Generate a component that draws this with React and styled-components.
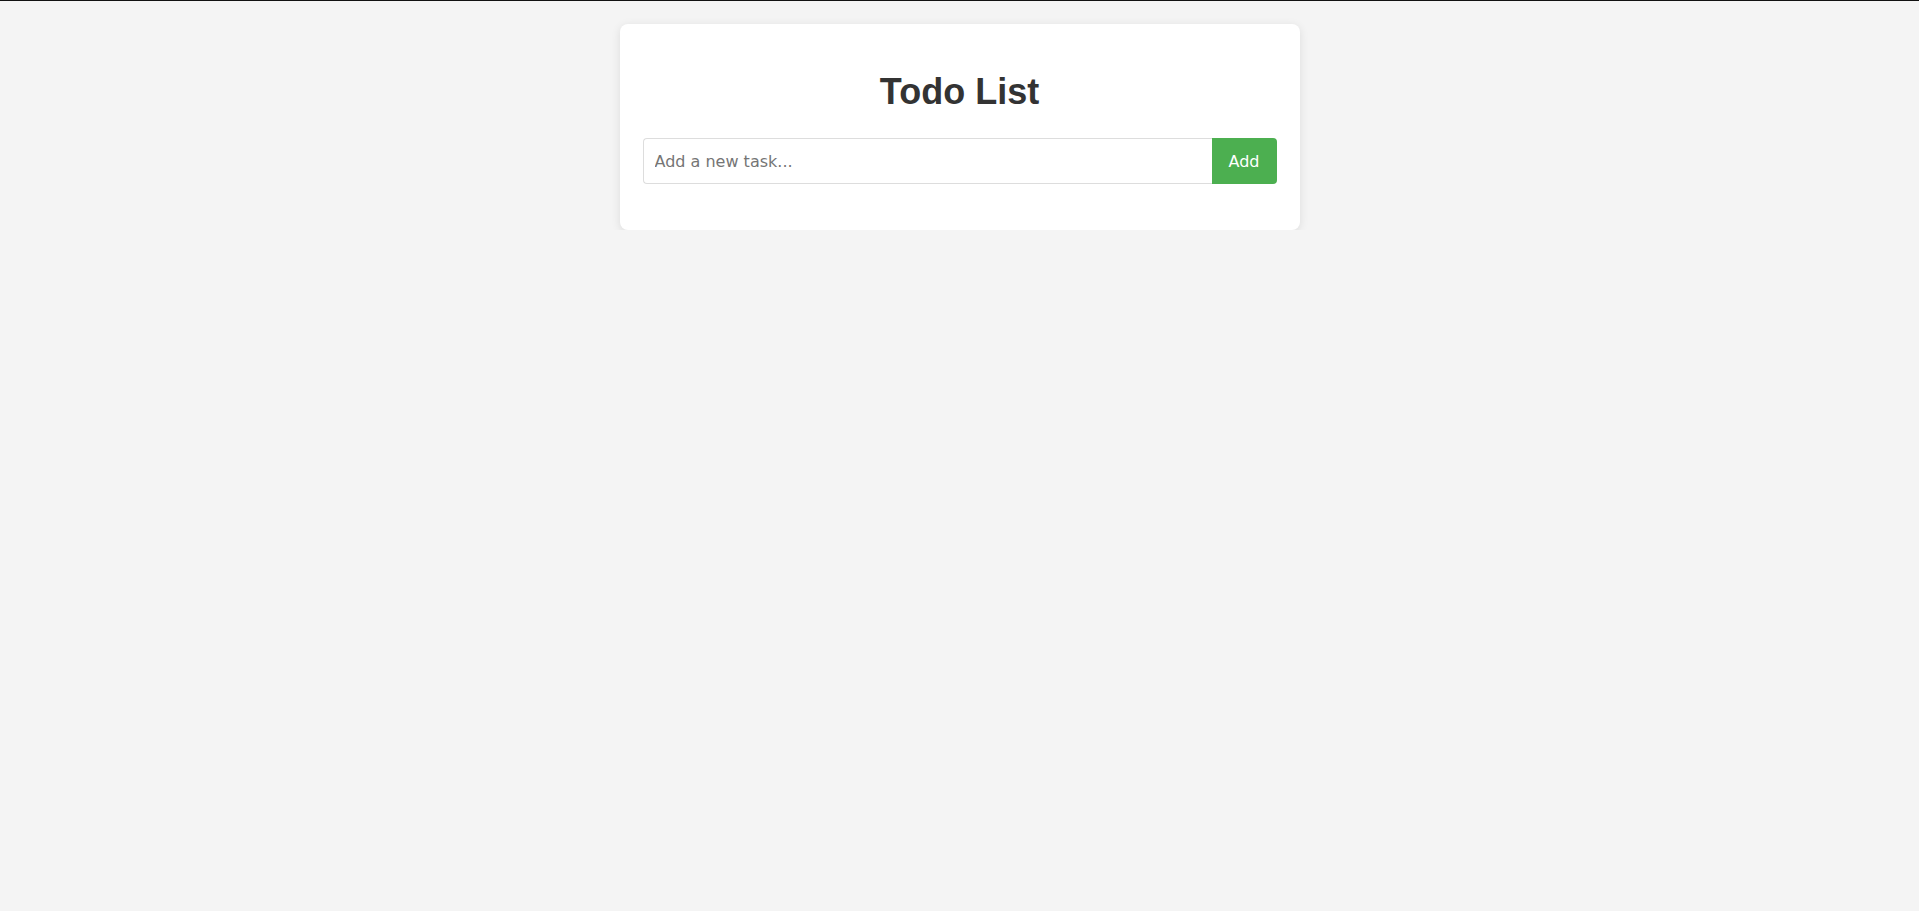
import styled, { createGlobalStyle } from 'styled-components';

const GlobalStyle = createGlobalStyle`
    html, body {
        margin: 0;
        padding: 0;
        background: #f4f4f4;
        font-family: "Liberation Sans", Arial, sans-serif;
    }
    body {
        border-top: 1px solid #111;
    }
`;

const App = () => {
    return (
        <>
            <GlobalStyle />
            <Page>
                <Card>
                    <Title>Todo List</Title>
                    <Form onSubmit={(e) => e.preventDefault()}>
                        <Input type="text" placeholder="Add a new task..." />
                        <AddButton type="submit">Add</AddButton>
                    </Form>
                </Card>
            </Page>
        </>
    );
};

const Page = styled.div`
    display: flex;
    justify-content: center;
    padding-top: 23px;
`;

const Card = styled.div`
    width: 680px;
    box-sizing: border-box;
    padding: 24px 23px 46px 23px;
    background: #fff;
    border-radius: 8px;
    box-shadow: 0 2px 10px rgba(0, 0, 0, 0.1);
`;

const Title = styled.h1`
    margin: 24px 0 26px;
    text-align: center;
    font-size: 36px;
    line-height: 40px;
    font-weight: 700;
    color: #333;
`;

const Form = styled.form`
    display: flex;
`;

const Input = styled.input`
    flex: 1;
    height: 46px;
    box-sizing: border-box;
    padding: 0 11px;
    border: 1px solid #ddd;
    border-right: none;
    border-radius: 4px 0 0 4px;
    font-family: "DejaVu Sans", Verdana, sans-serif;
    font-size: 16px;
    color: #333;
    outline: none;

    &::placeholder {
        color: #757575;
    }
`;

const AddButton = styled.button`
    height: 46px;
    padding: 0 17px;
    background-color: #4caf50;
    color: white;
    border: none;
    border-radius: 0 4px 4px 0;
    font-family: "DejaVu Sans", Verdana, sans-serif;
    font-size: 16px;
    cursor: pointer;

    &:hover {
        background-color: #45a049;
    }
`;

export default App;
